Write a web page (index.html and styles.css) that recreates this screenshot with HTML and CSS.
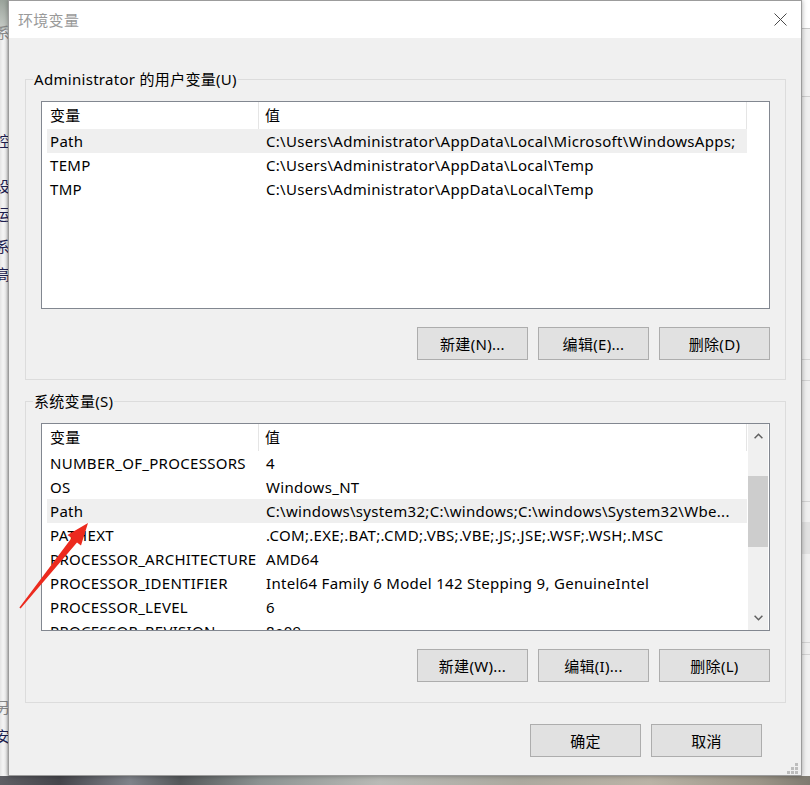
FILE: index.html
```html
<!DOCTYPE html>
<html lang="zh-CN">
<head>
<meta charset="utf-8">
<title>环境变量</title>
<link rel="stylesheet" href="styles.css">
</head>
<body>
<div class="screen">
  <div class="main-row">
    <div class="left-strip">
      <div class="ls-top"></div>
      <span class="ls-char gray c1">系</span>
      <span class="ls-char dark c2">控</span>
      <span class="ls-char dark c3">设</span>
      <span class="ls-char dark c4">运</span>
      <span class="ls-char dark c5">系</span>
      <span class="ls-char dark c6">高</span>
      <span class="ls-char gray c7">另</span>
      <span class="ls-char dark c8">安</span>
    </div>
    <div class="dialog">
      <div class="titlebar">
        <span class="title">环境变量</span>
        <svg class="close" width="13" height="13" viewBox="0 0 13 13"><path d="M0.5 0.5 L12.5 12.5 M12.5 0.5 L0.5 12.5" stroke="#4a4a4a" stroke-width="1" fill="none"/></svg>
      </div>
      <div class="body">
        <fieldset class="group first">
          <legend>Administrator 的用户变量(U)</legend>
          <div class="list">
            <div class="area">
              <div class="head"><div class="h1">变量</div><div class="h2">值</div></div>
              <div class="lrow sel"><div class="k">Path</div><div class="v">C:\Users\Administrator\AppData\Local\Microsoft\WindowsApps;</div></div>
              <div class="lrow"><div class="k">TEMP</div><div class="v">C:\Users\Administrator\AppData\Local\Temp</div></div>
              <div class="lrow"><div class="k">TMP</div><div class="v">C:\Users\Administrator\AppData\Local\Temp</div></div>
            </div>
          </div>
          <div class="btns">
            <button class="btn">新建(N)...</button>
            <button class="btn">编辑(E)...</button>
            <button class="btn">删除(D)</button>
          </div>
        </fieldset>
        <fieldset class="group second">
          <legend>系统变量(S)</legend>
          <div class="list">
            <div class="area">
              <div class="head"><div class="h1">变量</div><div class="h2">值</div></div>
              <div class="lrow"><div class="k">NUMBER_OF_PROCESSORS</div><div class="v">4</div></div>
              <div class="lrow"><div class="k">OS</div><div class="v">Windows_NT</div></div>
              <div class="lrow sel"><div class="k">Path</div><div class="v">C:\windows\system32;C:\windows;C:\windows\System32\Wbe...</div></div>
              <div class="lrow"><div class="k">PATHEXT</div><div class="v">.COM;.EXE;.BAT;.CMD;.VBS;.VBE;.JS;.JSE;.WSF;.WSH;.MSC</div></div>
              <div class="lrow"><div class="k">PROCESSOR_ARCHITECTURE</div><div class="v">AMD64</div></div>
              <div class="lrow"><div class="k">PROCESSOR_IDENTIFIER</div><div class="v">Intel64 Family 6 Model 142 Stepping 9, GenuineIntel</div></div>
              <div class="lrow"><div class="k">PROCESSOR_LEVEL</div><div class="v">6</div></div>
              <div class="lrow"><div class="k">PROCESSOR_REVISION</div><div class="v">8e09</div></div>
            </div>
            <div class="vscroll">
              <div class="sb-btn"><svg width="9" height="6" viewBox="0 0 9 6"><path d="M0.6 5.2 L4.5 1.2 L8.4 5.2" stroke="#606060" stroke-width="1.5" fill="none"/></svg></div>
              <div class="sb-track"><div class="sb-thumb"></div></div>
              <div class="sb-btn"><svg width="9" height="6" viewBox="0 0 9 6"><path d="M0.6 0.8 L4.5 4.8 L8.4 0.8" stroke="#606060" stroke-width="1.5" fill="none"/></svg></div>
            </div>
          </div>
          <div class="btns">
            <button class="btn">新建(W)...</button>
            <button class="btn">编辑(I)...</button>
            <button class="btn">删除(L)</button>
          </div>
        </fieldset>
        <div class="dlg-btns">
          <button class="btn">确定</button>
          <button class="btn">取消</button>
        </div>
      </div>
      <svg class="grip" width="11" height="11" viewBox="0 0 11 11">
        <g fill="#bdbdbd">
          <rect x="8" y="0" width="3" height="3"/>
          <rect x="4" y="4" width="3" height="3"/><rect x="8" y="4" width="3" height="3"/>
          <rect x="0" y="8" width="3" height="3"/><rect x="4" y="8" width="3" height="3"/><rect x="8" y="8" width="3" height="3"/>
        </g>
      </svg>
    </div>
    <div class="right-strip"></div>
  </div>
  <div class="bottom-strip"></div>
  <svg class="arrow" width="810" height="785" viewBox="0 0 810 785">
    <polygon points="88,523 81,545.5 77,542.4 20.6,608.4 19.4,607.4 71.6,538 67.5,535" fill="#ec2a1e"/>
  </svg>
</div>
</body>
</html>
```

FILE: styles.css
```css
* { box-sizing: border-box; }

html, body {
  margin: 0;
  padding: 0;
}

body {
  width: 810px;
  height: 785px;
  overflow: hidden;
  font-family: "Noto Sans", "Noto Sans CJK SC", sans-serif;
  font-size: 15px;
  letter-spacing: 0.3px;
  color: #000;
  background: #d8d8d8;
}

.screen {
  position: relative;
  width: 810px;
  height: 785px;
}

.main-row {
  display: flex;
  height: 776px;
}

/* background window on the left */
.left-strip {
  width: 8px;
  height: 776px;
  overflow: hidden;
  display: flex;
  flex-direction: column;
  background: linear-gradient(to right, #e4e4e4 0, #f6f6f6 3px, #f4f4f4 6px, #cfcfcf 8px);
}

.ls-top {
  height: 30px;
  flex: none;
  background: linear-gradient(to bottom, #9aa39b, #c7ccc7);
  border-bottom: 1px solid #b8b8b8;
}

.ls-char {
  display: block;
  width: 8px;
  height: 20px;
  line-height: 20px;
  overflow: hidden;
  text-indent: -5px;
  font-size: 15px;
  flex: none;
}

.ls-char.gray { color: #8a8a8a; }
.ls-char.dark { color: #1d2050; }

.c1 { margin-top: -8px; }
.c2 { margin-top: 89px; }
.c3 { margin-top: 25px; }
.c4 { margin-top: 8px; }
.c5 { margin-top: 12px; }
.c6 { margin-top: 8px; }
.c7 { margin-top: 413px; }
.c8 { margin-top: 9px; }

/* dialog */
.dialog {
  position: relative;
  width: 794px;
  height: 776px;
  flex: none;
  background: #f0f0f0;
  border: 1px solid #9c9c9c;
  box-shadow: 0 0 5px rgba(0, 0, 0, 0.35);
  display: flex;
  flex-direction: column;
  z-index: 1;
}

.titlebar {
  height: 37px;
  flex: none;
  background: #fff;
  display: flex;
  align-items: center;
  justify-content: space-between;
  padding: 0 14px 1px 9px;
}

.title {
  color: #9a9a9a;
  font-size: 15px;
}

.close {
  display: block;
  margin-top: 1px;
}

.body {
  flex: 1;
  display: flex;
  flex-direction: column;
}

.group {
  margin: 0 15px 0 16px;
  padding: 12px 15px 19px 15px;
  border: 1px solid #dcdcdc;
  min-width: 0;
}

.group.first { margin-top: 31px; }
.group.second { margin-top: 11px; padding-bottom: 20px; }

.group legend {
  margin-left: -8px;
  padding: 0 1px;
  line-height: 20px;
  height: 20px;
}

.list {
  height: 208px;
  border: 1px solid #828790;
  background: #fff;
  display: flex;
  overflow: hidden;
}

.area {
  width: 706px;
  flex: none;
  overflow: hidden;
}

.head {
  display: flex;
  height: 27px;
  padding-left: 5px;
}

.head .h1 {
  width: 212px;
  padding-left: 3px;
  line-height: 27px;
  border-right: 1px solid #e5e5e5;
}

.head .h2 {
  width: 488px;
  padding-left: 6px;
  line-height: 27px;
  border-right: 1px solid #e5e5e5;
}

.lrow {
  display: flex;
  width: 700px;
  height: 24px;
  margin-left: 5px;
  line-height: 24px;
  white-space: nowrap;
}

.lrow.sel { background: #efefef; }

.lrow .k {
  width: 212px;
  padding-left: 3px;
  overflow: hidden;
}

.lrow .v {
  width: 488px;
  padding-left: 7px;
  overflow: hidden;
}

.vscroll {
  width: 20px;
  flex: none;
  margin-right: 1px;
  background: #f0f0f0;
  display: flex;
  flex-direction: column;
}

.sb-btn {
  height: 24px;
  flex: none;
  display: flex;
  align-items: center;
  justify-content: center;
}

.sb-btn svg { display: block; }

.sb-track {
  flex: 1;
}

.sb-thumb {
  margin-top: 28px;
  height: 71px;
  background: #cdcdcd;
}

.btns {
  display: flex;
  justify-content: flex-end;
  gap: 10px;
  margin-top: 18px;
}

.btn {
  width: 111px;
  height: 33px;
  margin: 0;
  padding: 0;
  background: #e1e1e1;
  border: 1px solid #adadad;
  border-radius: 0;
  font-family: "Noto Sans", "Noto Sans CJK SC", sans-serif;
  font-size: 15px;
  letter-spacing: 0.3px;
  color: #000;
}

.dlg-btns {
  display: flex;
  justify-content: flex-end;
  gap: 10px;
  margin-top: 21px;
  padding-right: 39px;
}

.grip {
  position: absolute;
  right: 3px;
  bottom: 1px;
  display: block;
}

/* background on the right */
.right-strip {
  width: 8px;
  height: 776px;
  flex: none;
  background:
    linear-gradient(to bottom,
      #ffffff 0, #ffffff 28px, #c8c8c8 28px, #c8c8c8 29px,
      #f2f2f2 29px, #f2f2f2 96px, #cfcfcf 96px, #cfcfcf 97px,
      #f0f0f0 97px, #f0f0f0 359px, #d4d4d4 359px, #d4d4d4 360px,
      #f0f0f0 360px, #f0f0f0 380px, #d4d4d4 380px, #d4d4d4 381px,
      #f0f0f0 381px, #f0f0f0 501px, #d4d4d4 501px, #d4d4d4 502px,
      #f0f0f0 502px, #f0f0f0 522px, #e1e1e1 522px, #e1e1e1 554px,
      #f0f0f0 554px, #f0f0f0 642px, #d4d4d4 642px, #d4d4d4 643px,
      #f0f0f0 643px, #f0f0f0 654px, #d4d4d4 654px, #d4d4d4 655px,
      #f2f2f2 655px, #f2f2f2 776px);
}

.bottom-strip {
  height: 9px;
  background: linear-gradient(to right,
    #5f5f64 0, #45454b 60px, #80838a 130px, #55585a 180px, #8d9392 260px,
    #b9bab6 380px, #aca99f 520px, #bab3a6 650px, #9c9588 760px, #7f7a70 810px);
}

.arrow {
  position: absolute;
  left: 0;
  top: 0;
  pointer-events: none;
  z-index: 5;
}
```
